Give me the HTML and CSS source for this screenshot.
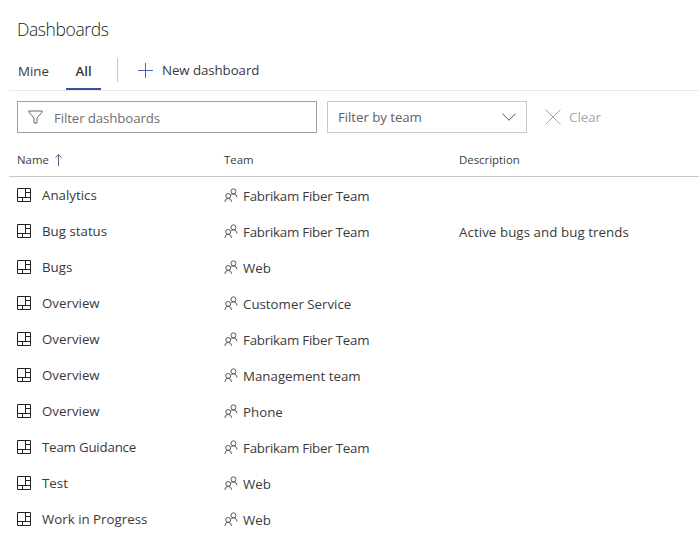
FILE: index.html
```html
<!DOCTYPE html>
<html lang="en">
<head>
<meta charset="utf-8">
<title>Dashboards</title>
<link rel="stylesheet" href="styles.css">
</head>
<body>
<svg class="defs" aria-hidden="true">
  <symbol id="tile" viewBox="0 0 14 14"><path d="M.5.5h13v13H.5zM.5 9.5h13M8.5.5v9M8.5 4.5h5M5.5 9.5v4"/></symbol>
  <symbol id="people" viewBox="0 0 14 14"><circle cx="9.5" cy="3.3" r="2.5"/><path d="M7 7.2Q7.8 5.8 9.5 5.8 12.6 5.8 13 9.4"/><circle cx="4.2" cy="7.9" r="2.4"/><path d="M.8 13.8Q1.2 10.3 4.2 10.3T7.6 13.8"/></symbol>
</svg>
<main class="page">
  <h1 class="title">Dashboards</h1>
  <nav class="tabs">
    <a class="tab mine">Mine</a>
    <a class="tab active">All</a>
    <span class="divider"></span>
    <button class="new"><svg class="plus" viewBox="0 0 15 15"><path d="M7.5 0v15M0 7.5h15"/></svg><span>New dashboard</span></button>
  </nav>
  <section class="filters">
    <div class="search"><svg class="funnel" viewBox="0 0 15 14"><path d="M.8 1h13.4v1L9 8v5H6V8L.8 2z"/></svg><span>Filter dashboards</span></div>
    <div class="select"><span>Filter by team</span><svg class="chevron" viewBox="0 0 14 8"><path d="M.4.6 7 7.2 13.6.6"/></svg></div>
    <button class="clear"><svg class="cross" viewBox="0 0 16 16"><path d="m.5.5 15 15m0-15-15 15"/></svg><span>Clear</span></button>
  </section>
  <div class="row head">
    <div class="name">Name<svg class="arrow" viewBox="0 0 7 12"><path d="M3.5 12V.8M.5 3.6l3-3 3 3"/></svg></div><div class="team">Team</div><div>Description</div>
  </div>
  <div class="row"><div class="name"><svg class="icon"><use href="#tile"/></svg>Analytics</div><div class="team"><svg class="icon"><use href="#people"/></svg><span class="fabrikam">Fabrikam Fiber Team</span></div></div>
  <div class="row"><div class="name"><svg class="icon"><use href="#tile"/></svg>Bug status</div><div class="team"><svg class="icon"><use href="#people"/></svg><span class="fabrikam">Fabrikam Fiber Team</span></div><div class="desc">Active bugs and bug trends</div></div>
  <div class="row"><div class="name"><svg class="icon"><use href="#tile"/></svg>Bugs</div><div class="team"><svg class="icon"><use href="#people"/></svg>Web</div></div>
  <div class="row"><div class="name"><svg class="icon"><use href="#tile"/></svg>Overview</div><div class="team"><svg class="icon"><use href="#people"/></svg>Customer Service</div></div>
  <div class="row"><div class="name"><svg class="icon"><use href="#tile"/></svg>Overview</div><div class="team"><svg class="icon"><use href="#people"/></svg><span class="fabrikam">Fabrikam Fiber Team</span></div></div>
  <div class="row"><div class="name"><svg class="icon"><use href="#tile"/></svg>Overview</div><div class="team"><svg class="icon"><use href="#people"/></svg>Management team</div></div>
  <div class="row"><div class="name"><svg class="icon"><use href="#tile"/></svg>Overview</div><div class="team"><svg class="icon"><use href="#people"/></svg>Phone</div></div>
  <div class="row"><div class="name guidance"><svg class="icon"><use href="#tile"/></svg>Team Guidance</div><div class="team"><svg class="icon"><use href="#people"/></svg><span class="fabrikam">Fabrikam Fiber Team</span></div></div>
  <div class="row"><div class="name"><svg class="icon"><use href="#tile"/></svg>Test</div><div class="team"><svg class="icon"><use href="#people"/></svg>Web</div></div>
  <div class="row"><div class="name"><svg class="icon"><use href="#tile"/></svg>Work in Progress</div><div class="team"><svg class="icon"><use href="#people"/></svg>Web</div></div>
</main>
</body>
</html>
```
FILE: styles.css
```css
* { box-sizing: border-box; }
body { margin: 0; background: #fff; color: #3a3a3a; font: 13.3px/20px "Open Sans", sans-serif; white-space: nowrap; }
svg { fill: none; stroke: #222; flex: none; display: block; }
.defs { width: 0; height: 0; position: absolute; }
button { font: inherit; color: inherit; background: none; border: 0; padding: 0; display: flex; align-items: center; }
.page { height: 552px; overflow: hidden; padding-left: 9px; }
.title { margin: 0; padding: 17px 0 0 8px; height: 52px; font-size: 17.5px; line-height: 24px; font-weight: 300; letter-spacing: -.4px; color: #222; }
.tabs { display: flex; height: 39px; border-bottom: 1px solid #eaeaea; }
.tab { height: 38px; padding-top: 9px; }
.mine { margin-left: 9px; width: 48px; }
.active { width: 35px; text-align: center; font-weight: 600; border-bottom: 2px solid #36529b; }
.divider { width: 1px; height: 24px; margin: 6px 20px 0 16px; background: #c8c8c8; }
.new { height: 36px; gap: 9px; letter-spacing: -.08px; }
.plus { width: 15px; height: 15px; stroke: #4a61c0; }
.filters { display: flex; margin: 10px 0 0 8px; height: 32px; }
.search { width: 300px; border: 1px solid #a0a0a0; display: flex; align-items: center; padding: 2px 0 0 10px; gap: 11px; color: #707070; letter-spacing: -.13px; }
.funnel { width: 15px; height: 14px; stroke: #666; margin-top: -3px; }
.select { width: 200px; margin-left: 10px; border: 1px solid #c8c8c8; display: flex; align-items: center; justify-content: space-between; padding: 0 10px; color: #606060; letter-spacing: -.07px; }
.chevron { width: 14px; height: 8px; stroke: #555; }
.clear { margin-left: 18px; gap: 8px; color: #a6a6a6; }
.cross { width: 16px; height: 16px; stroke: #a6a6a6; }
.row { display: grid; grid-template-columns: 207px 235px 1fr; padding-left: 8px; height: 36px; align-items: center; }
.row > div { display: flex; align-items: center; }
.name .icon { margin-right: 11px; }
.icon { width: 14px; height: 14px; }
.team .icon { margin-right: 5px; position: relative; top: -1px; stroke: #555; }
.row .team, .row .desc { padding-top: 2px; }
.row .desc { letter-spacing: .07px; }
.fabrikam { letter-spacing: -.22px; }
.row .guidance { letter-spacing: -.2px; }
.head { height: 44px; border-bottom: 1px solid #c8c8c8; font-size: 11.4px; padding-top: 10px; }
.head .team { padding-top: 0; }
.arrow { width: 7px; height: 12px; margin-left: 6px; stroke: #605878; }
```
